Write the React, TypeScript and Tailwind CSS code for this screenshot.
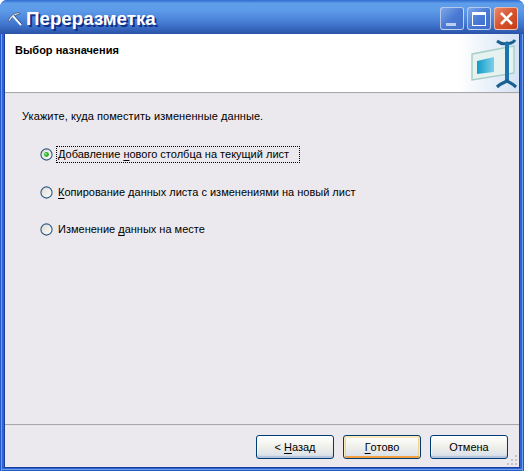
const font = { fontFamily: '"Liberation Sans", Arial, sans-serif' };

function Radio({ checked }: { checked?: boolean }) {
  return (
    <svg width="13" height="13" viewBox="0 0 13 13" className="shrink-0">
      <defs>
        <linearGradient id="rf" x1="0" y1="0" x2="1" y2="1">
          <stop offset="0" stopColor="#dcd9d0" />
          <stop offset="1" stopColor="#ffffff" />
        </linearGradient>
      </defs>
      <circle cx="6.5" cy="6.5" r="5.6" fill="url(#rf)" stroke="#2c5a85" strokeWidth="1.1" />
      {checked && <circle cx="6.5" cy="6.5" r="2.4" fill="#2cb52c" />}
      {checked && <circle cx="6" cy="6" r="0.9" fill="#8fe98f" />}
    </svg>
  );
}

function Option({ before, u, after, checked }: { before: string; u: string; after: string; checked?: boolean }) {
  return (
    <div className="flex items-center gap-[3px] h-[17px]">
      <Radio checked={checked} />
      <span
        className={`h-[17px] flex items-center pl-px pr-[10px] whitespace-pre text-[11px] leading-[15px] text-black border border-dotted ${
          checked ? "border-black" : "border-transparent"
        }`}
      >
        {before}
        <span className="underline underline-offset-2">{u}</span>
        {after}
      </span>
    </div>
  );
}

function Btn({ children, def }: { children: React.ReactNode; def?: boolean }) {
  return (
    <button
      className={`w-[78px] h-[24px] rounded-[3px] border border-[#003c74] text-[11px] text-black flex items-center justify-center bg-gradient-to-b from-[#ffffff] via-[#f0f0ea] to-[#d6dde8] ${
        def
          ? "shadow-[inset_0_1px_0_1px_#fce8b8,inset_0_-2px_0_#f0a040,inset_2px_0_0_#f8d088,inset_-2px_0_0_#f8d088]"
          : "shadow-[inset_0_-2px_1px_#b4c4dc,inset_1px_1px_0_#ffffff]"
      }`}
    >
      {children}
    </button>
  );
}

function Caption({ children, red }: { children: React.ReactNode; red?: boolean }) {
  return (
    <div
      className={`w-[24px] h-[23px] rounded-[3px] border border-white/60 flex items-center justify-center relative ${
        red
          ? "bg-gradient-to-br from-[#e8886a] via-[#d8532c] to-[#c43c16]"
          : "bg-gradient-to-br from-[#7fa8e8] via-[#4a7ad4] to-[#3f6cc8]"
      }`}
    >
      {children}
    </div>
  );
}

export default function App() {
  return (
    <div className="w-[524px] h-[471px] bg-white overflow-hidden" style={font}>
      <div className="w-full h-full rounded-t-[7px] overflow-hidden flex flex-col bg-[#2f62d4]">
        <div className="h-[34px] shrink-0 flex items-center pl-[5px] pr-[6px] [background-image:linear-gradient(to_bottom,#2f6bd0_0%,#5f9fea_10%,#5d9be8_30%,#4a82d8_60%,#3a6cc4_80%,#2a52a8_100%)]">
          <svg width="20" height="20" viewBox="0 0 20 20" className="shrink-0 mt-[3px]">
            <path d="M3 12 C5 7 9 4 14 3.5 L15 5 C11 5.5 7 8 4.5 12.5 Z" fill="#dfe5ee" stroke="#33456a" strokeWidth="0.7" />
            <path d="M8 7 L16 16" stroke="#f2f5fa" strokeWidth="2" />
            <path d="M9 6 L17 15" stroke="#24406e" strokeWidth="0.8" />
          </svg>
          <span className="ml-[1px] mt-[5px] text-white font-bold text-[18.75px] leading-none [text-shadow:2px_2px_0_#0f2f8a]">
            Переразметка
          </span>
          <div className="ml-auto flex gap-[3px] mt-[3px]">
            <Caption>
              <div className="absolute left-[5px] bottom-[3px] w-[10px] h-[3px] bg-[#b9cff2]" />
            </Caption>
            <Caption>
              <div className="w-[14px] h-[14px] border border-white border-t-[3px]" />
            </Caption>
            <Caption red>
              <svg width="15" height="15" viewBox="0 0 15 15">
                <path d="M2 2 L13 13 M13 2 L2 13" stroke="#fff" strokeWidth="2.6" />
              </svg>
            </Caption>
          </div>
        </div>
        <div className="flex-1 min-h-0 flex flex-col pl-[4px] pr-[4px] pb-[3px] shadow-[inset_1px_0_0_#2459c8,inset_2px_0_0_#6fa0ea,inset_-1px_0_0_#2459c8,inset_-2px_0_0_#6fa0ea,inset_0_-1px_0_#2459c8,inset_0_-2px_0_#6fa0ea]">
          <div className="flex-1 flex flex-col bg-[#ebe9ed] min-h-0 border-b border-l border-r border-[#1a3f9c]">
            <div className="h-[58px] shrink-0 bg-white relative overflow-hidden">
              <div className="pl-[10px] pt-[9px] text-[11px] font-bold text-black leading-[14px]">Выбор назначения</div>
              <div className="absolute right-0 top-0 w-[60px] h-full bg-gradient-to-r from-white to-[#d4e2f4]" />
              <svg width="60" height="58" viewBox="0 0 60 58" className="absolute right-0 top-0">
                <defs>
                  <linearGradient id="inner" x1="0" y1="0" x2="1" y2="0">
                    <stop offset="0" stopColor="#0f9cc8" />
                    <stop offset="1" stopColor="#7fd0e8" />
                  </linearGradient>
                </defs>
                <path d="M13 20 L55 12 L55 39 L13 46 Z" fill="#e6f2ef" stroke="#a6cdc6" strokeWidth="1.4" />
                <path d="M18 27 L35 23 L35 38 L18 40 Z" fill="url(#inner)" />
                <path d="M38 7 C42 10 46 10 48 9 C50 10 54 9 56 6" fill="none" stroke="#17608f" strokeWidth="3" />
                <path d="M48 9 L48 48" stroke="#1a74ae" strokeWidth="4" />
                <path d="M38 53 C42 49 46 48 48 47 C50 48 54 50 57 53" fill="none" stroke="#17608f" strokeWidth="3.2" />
              </svg>
            </div>
            <div className="h-[2px] shrink-0 bg-[#aaa7aa] border-b border-white/70" />
            <div className="flex-1 pl-[17px] pt-[14px]">
              <div className="text-[11px] leading-[16px] tracking-[0.07px] text-black">Укажите, куда поместить измененные данные.</div>
              <div className="ml-[18px] mt-[22px] flex flex-col">
                <Option before="Добавление " u="н" after="ового столбца на текущий лист" checked />
                <div className="mt-[21px]">
                  <Option before="" u="К" after="опирование данных листа с изменениями на новый лист" />
                </div>
                <div className="mt-[20px]">
                  <Option before="Изменение " u="д" after="анных на месте" />
                </div>
              </div>
            </div>
            <div className="h-[2px] shrink-0 bg-[#aaa7aa] border-b border-white/70" />
            <div className="h-[41px] shrink-0 flex justify-end items-start pt-[9px] pr-[11px] gap-[9px] relative">
              <Btn>
                &lt;&nbsp;<span className="underline underline-offset-2">Н</span>азад
              </Btn>
              <Btn def>
                <span className="underline underline-offset-2">Г</span>отово
              </Btn>
              <Btn>Отмена</Btn>
              <svg width="12" height="12" viewBox="0 0 12 12" className="absolute right-0 bottom-0" fill="#c4c2c6">
                <rect x="8" y="0" width="2" height="2" />
                <rect x="4" y="4" width="2" height="2" />
                <rect x="8" y="4" width="2" height="2" />
                <rect x="0" y="8" width="2" height="2" />
                <rect x="4" y="8" width="2" height="2" />
                <rect x="8" y="8" width="2" height="2" />
              </svg>
            </div>
          </div>
        </div>
      </div>
    </div>
  );
}
